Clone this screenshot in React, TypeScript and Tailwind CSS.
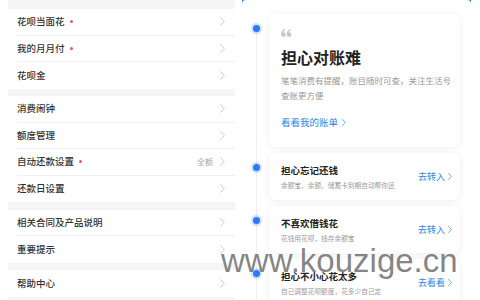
import React from "react";

type Row = { label: string; dot?: boolean; value?: string };

const groups: Row[][] = [
  [
    { label: "花呗当面花", dot: true },
    { label: "我的月月付", dot: true },
    { label: "花呗金" },
  ],
  [
    { label: "消费闹钟" },
    { label: "额度管理" },
    { label: "自动还款设置", dot: true, value: "全额" },
    { label: "还款日设置" },
  ],
  [{ label: "相关合同及产品说明" }, { label: "重要提示" }],
  [{ label: "帮助中心" }],
];

const cards = [
  { title: "担心忘记还钱", sub: "余额宝、余额、储蓄卡到期自动帮你还", action: "去转入" },
  { title: "不喜欢借钱花", sub: "花钱用花呗，钱存余额宝", action: "去转入" },
  { title: "担心不小心花太多", sub: "自己调整花呗额度，花多少自己定", action: "去看看" },
];

function Chevron({ className }: { className?: string }) {
  return (
    <svg viewBox="0 0 5 9" className={className} fill="none">
      <path d="M0.7 0.7 L4.2 4.5 L0.7 8.3" stroke="currentColor" strokeWidth="0.9" strokeLinecap="round" strokeLinejoin="round" />
    </svg>
  );
}

function Dot() {
  return (
    <div className="w-[17px] shrink-0">
      <div className="ml-[1px] mt-[11px] w-[7px] h-[7px] rounded-full bg-[#2b7cf2] shadow-[0_0_0_2px_rgba(43,124,242,0.22)]" />
    </div>
  );
}

function Quote() {
  return (
    <svg viewBox="0 0 11 8" className="w-[11px] h-[8px] text-[#c9c9c9]" fill="currentColor">
      <path d="M0 5.6 C0 2.8 1.4 0.9 3.9 0 L4.3 0.9 C3 1.6 2.4 2.5 2.3 3.2 A2.4 2.4 0 1 1 0 5.6Z" />
      <path d="M5.6 5.6 C5.6 2.8 7 0.9 9.5 0 L9.9 0.9 C8.6 1.6 8 2.5 7.9 3.2 A2.4 2.4 0 1 1 5.6 5.6Z" />
    </svg>
  );
}

export default function App() {
  return (
    <div className="relative w-[480px] h-[300px] overflow-hidden bg-white flex font-['Noto_Sans_CJK_SC',sans-serif]">
      {/* left settings list */}
      <div className="w-[240px] h-full pl-[8px] pr-[5px]">
        <div className="h-full bg-[#f5f5f7] flex flex-col pt-[9px]">
          {groups.map((g, gi) => (
            <div key={gi} className={`bg-white flex flex-col ${gi > 0 ? "mt-[7.5px]" : ""}`}>
              {g.map((r, ri) => (
                <div key={r.label} className="h-[26.5px] flex items-center pl-[9px]">
                  <div className={`h-full flex-1 flex items-center pr-[10px] ${ri < g.length - 1 ? "border-b border-[#f1f1f3]" : ""}`}>
                    <span className="text-[9.5px] text-[#333] font-medium leading-none">{r.label}</span>
                    {r.dot && <span className="ml-[5px] w-[3px] h-[3px] rounded-full bg-[#e6586e]" />}
                    <div className="flex-1" />
                    {r.value && <span className="mr-[7px] text-[8px] text-[#aaa] leading-none">{r.value}</span>}
                    <Chevron className="w-[5px] h-[9px] text-[#c6c6c8]" />
                  </div>
                </div>
              ))}
            </div>
          ))}
        </div>
      </div>

      {/* right timeline */}
      <div className="relative w-[240px] h-full bg-white">
        <div className="ml-[2px] w-[229px] h-[4px] bg-[#2d7ff9]">
          <div className="h-full bg-white rounded-t-[6px]" />
        </div>
        <div className="absolute left-[16px] top-[28px] bottom-0 w-px bg-[#eceef2]" />
        <div className="relative flex flex-col gap-[6px] pt-[10px] pl-[12px] pr-[20px]">
          <div className="flex">
            <Dot />
            <div className="flex-1 h-[133px] bg-white rounded-[7px] shadow-[0_1px_7px_rgba(0,0,0,0.07)] pl-[12px] pr-[2px] pt-[15px]">
              <Quote />
              <div className="mt-[10px] text-[16px] leading-[20px] font-bold text-[#222]">担心对账难</div>
              <div className="mt-[6px] text-[8.5px] leading-[15px] text-[#999] whitespace-nowrap">
                笔笔消费有提醒，账目随时可查，关注生活号
                <br />
                查账更方便
              </div>
              <div className="mt-[12px] flex items-center gap-[4px] text-[9.5px] leading-[14px] text-[#2e86de]">
                看看我的账单
                <Chevron className="w-[4px] h-[7px]" />
              </div>
            </div>
          </div>
          {cards.map((c) => (
            <div key={c.title} className="flex">
              <Dot />
              <div className="flex-1 h-[47px] bg-white rounded-[7px] shadow-[0_1px_7px_rgba(0,0,0,0.07)] pl-[12px] pr-[8px] flex items-center">
                <div className="flex-1 pt-[1px]">
                  <div className="text-[9.5px] leading-[13px] font-bold text-[#222]">{c.title}</div>
                  <div className="mt-[2.5px] text-[6.7px] leading-[10px] text-[#9a9a9a]">{c.sub}</div>
                </div>
                <div className="flex items-center gap-[3px] text-[9px] text-[#2e86de] leading-none">
                  {c.action}
                  <Chevron className="w-[4px] h-[7px]" />
                </div>
              </div>
            </div>
          ))}
        </div>
      </div>

      {/* watermark */}
      <div className="absolute left-[221px] top-[244px] text-[33px] leading-none font-['Liberation_Sans',sans-serif] text-[rgba(100,100,100,0.78)] pointer-events-none">
        www.kouzige.cn
      </div>
    </div>
  );
}
